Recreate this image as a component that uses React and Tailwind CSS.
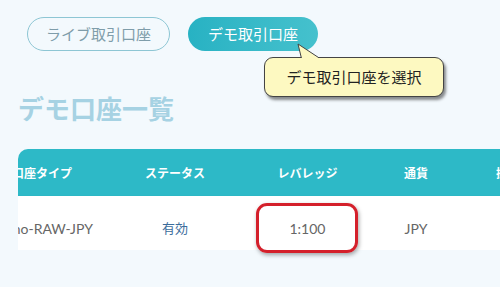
export default function App() {
  const jp = { fontFamily: '"Noto Sans CJK JP", "Noto Sans", sans-serif' };
  const lat = { fontFamily: 'Lato, "Noto Sans CJK JP", sans-serif' };
  return (
    <div className="relative w-[500px] h-[287px] overflow-hidden bg-[#f3f9fd]" style={jp}>
      <div className="flex gap-[18px] pl-[27px] pt-[17px]">
        <div className="h-[34px] w-[143px] rounded-full border border-[#8dc6d4] flex items-center justify-center text-[15px] text-[#7f9daa]">
          ライブ取引口座
        </div>
        <div className="h-[34px] w-[130px] rounded-full bg-gradient-to-r from-[#27b2c3] to-[#45c1cd] flex items-center justify-center text-[15px] text-white">
          デモ取引口座
        </div>
      </div>

      <div className="pl-[18px] pt-[44px] text-[26px] font-bold leading-none text-[#a6d2e3]">デモ口座一覧</div>

      <div className="ml-[18px] mt-[28px] overflow-hidden rounded-tl-[10px]">
        <div className="ml-[-39px] w-[600px]">
          <div className="flex h-[47px] items-center bg-[#2db9c7] text-[12px] font-bold text-white">
            <div className="w-[126px] shrink-0 text-center">口座タイプ</div>
            <div className="w-[140px] shrink-0 text-center">ステータス</div>
            <div className="w-[125px] shrink-0 text-center">レバレッジ</div>
            <div className="w-[92px] shrink-0 text-center">通貨</div>
            <div className="w-[92px] shrink-0 text-center">操作</div>
          </div>
          <div className="flex h-[54px] items-center pt-[10px] bg-white text-[13px] shadow-[0_1px_2px_rgba(0,0,0,0.15)]">
            <div className="w-[126px] shrink-0 text-center text-[14px] text-[#666]" style={lat}>Demo-RAW-JPY</div>
            <div className="w-[140px] shrink-0 text-center text-[#3b6c9b]">有効</div>
            <div className="w-[125px] shrink-0 text-center text-[14px] text-[#666]" style={lat}>1:100</div>
            <div className="w-[92px] shrink-0 text-center text-[14px] text-[#666]" style={lat}>JPY</div>
            <div className="w-[92px] shrink-0"></div>
          </div>
        </div>
      </div>

      <div className="absolute left-[256px] top-[203px] h-[50px] w-[102px] rounded-[11px] border-[3px] border-[#d4202b] shadow-[1px_2px_4px_rgba(0,0,0,0.35)]"></div>

      <div className="absolute left-[264px] top-[57px] h-[40px] w-[180px] rounded-[9px] border border-[#444] bg-[#fdf9c1] shadow-[2px_3px_3px_rgba(0,0,0,0.45)] flex items-center justify-center text-[15px] text-[#222]">
        デモ取引口座を選択
      </div>
      <svg className="absolute left-[290px] top-[43px]" width="32" height="17" viewBox="0 0 32 17">
        <path d="M11.5 15.5 L8 1 L30 15.5" fill="#fdf9c1" stroke="#444" strokeWidth="1" />
        <rect x="11" y="15" width="19" height="3" fill="#fdf9c1" />
      </svg>
    </div>
  );
}
